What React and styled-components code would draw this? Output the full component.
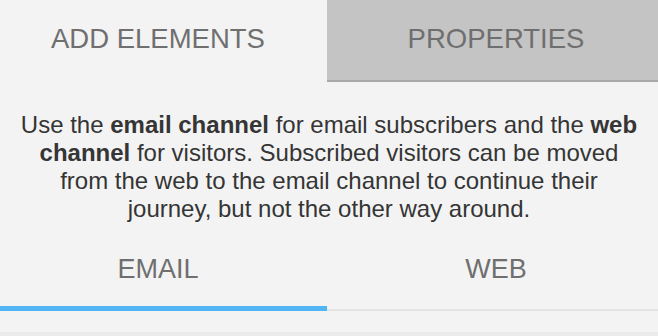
import React from "react";
import styled, { createGlobalStyle } from "styled-components";

const Global = createGlobalStyle`
  html, body { margin: 0; padding: 0; background: #f3f3f3; }
  body { font-family: "Liberation Sans", Arial, sans-serif; }
`;

const Page = styled.div`
  width: 658px;
  height: 336px;
  overflow: hidden;
  background: #f3f3f3;
  display: flex;
  flex-direction: column;
`;

const TopTabs = styled.div`
  display: grid;
  grid-template-columns: 327px 1fr;
  height: 82px;
`;

const TopTab = styled.div`
  display: flex;
  align-items: center;
  justify-content: center;
  box-sizing: border-box;
  height: 82px;
  padding: ${(p) => (p.$active ? "0 11px 4px 0" : "0 0 2px 7px")};
  background: ${(p) => (p.$active ? "#f3f3f3" : "#c4c4c4")};
  border-bottom: ${(p) => (p.$active ? "none" : "2px solid #a9a9a9")};
  color: #6f6f6f;
  font-size: 27.5px;
`;

const Description = styled.p`
  margin: 29px 0 0;
  padding: 0 17px;
  text-align: center;
  font-size: 24px;
  line-height: 28px;
  color: #353535;
  b { font-weight: 700; }
`;

const SubTabs = styled.div`
  display: grid;
  grid-template-columns: 327px 1fr;
  align-items: end;
`;

const SubTab = styled.div`
  box-sizing: border-box;
  text-align: center;
  padding-top: 30px;
  padding-bottom: ${(p) => (p.$active ? "21px" : "24px")};
  padding-left: ${(p) => (p.$active ? "0" : "7px")};
  padding-right: ${(p) => (p.$active ? "11px" : "0")};
  font-size: 27px;
  line-height: 32px;
  color: #6f6f6f;
  border-bottom: ${(p) => (p.$active ? "5px solid #52b5f6" : "2px solid #e3e3e3")};
`;

const Footer = styled.div`
  margin-top: 21px;
  height: 4px;
  background: #ebebeb;
`;

export default function App() {
  return (
    <>
      <Global />
      <Page>
        <TopTabs>
          <TopTab $active>ADD ELEMENTS</TopTab>
          <TopTab>PROPERTIES</TopTab>
        </TopTabs>
        <Description>
          Use the <b>email channel</b> for email subscribers and the <b>web channel</b> for
          visitors. Subscribed visitors can be moved from the web to the email channel to
          continue their journey, but not the other way around.
        </Description>
        <SubTabs>
          <SubTab $active>EMAIL</SubTab>
          <SubTab>WEB</SubTab>
        </SubTabs>
        <Footer />
      </Page>
    </>
  );
}
